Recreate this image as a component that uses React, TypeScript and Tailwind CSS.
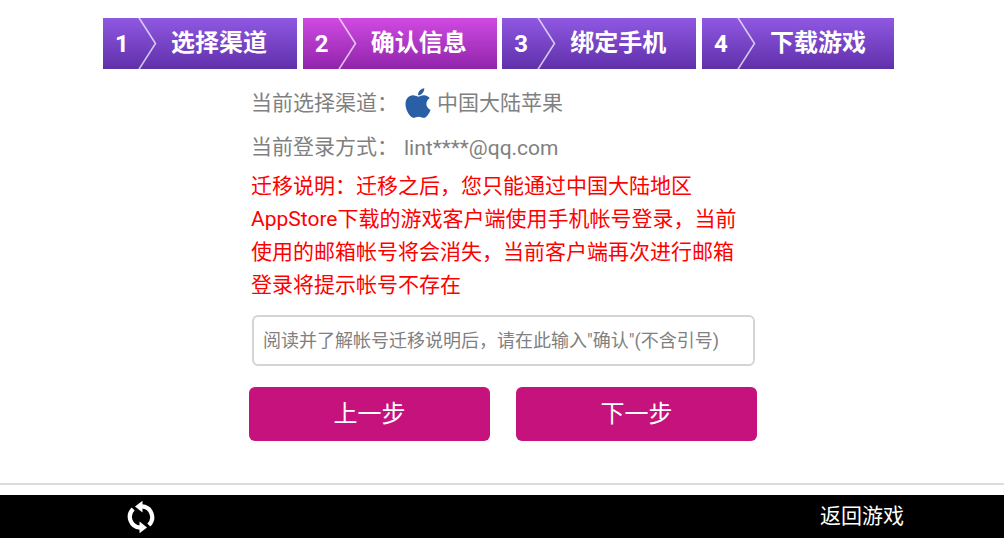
import React from 'react';
import { FaApple } from 'react-icons/fa';

const STEPS = [
  { num: '1', title: '选择渠道', width: 'w-[194px]', active: false },
  { num: '2', title: '确认信息', width: 'w-[194px]', active: true },
  { num: '3', title: '绑定手机', width: 'w-[194px]', active: false },
  { num: '4', title: '下载游戏', width: 'w-[192px]', active: false },
];

const Chevron = () => (
  <svg width="22" height="51" viewBox="0 0 22 51" className="shrink-0" fill="none">
    <path d="M1.5 -1 L18.5 25.5 L1.5 52" stroke="#fff" strokeOpacity="0.7" strokeWidth="1.6" />
  </svg>
);

const SyncIcon = () => (
  <svg width="28" height="34" viewBox="0 0 28 34" fill="#fff">
    <path d="M15 6.4 A10.8 10.8 0 0 1 21.8 25" fill="none" stroke="#fff" strokeWidth="4.2" />
    <path d="M13 27.6 A10.8 10.8 0 0 1 6.2 9" fill="none" stroke="#fff" strokeWidth="4.2" />
    <path d="M15.5 0.8 L15.5 12.4 L8 6.6 Z" />
    <path d="M12.5 21.6 L12.5 33.2 L20 27.4 Z" />
  </svg>
);

export default function App() {
  return (
    <div
      className="flex h-[538px] w-[1004px] flex-col overflow-hidden bg-white"
      style={{ fontFamily: 'Roboto, "Noto Sans CJK SC", sans-serif' }}
    >
      {/* Steps */}
      <div className="ml-[103px] mt-[18px] flex gap-[5.67px]">
        {STEPS.map((step) => (
          <div
            key={step.num}
            className={`flex h-[51px] items-center text-white ${step.width} ${
              step.active
                ? 'bg-gradient-to-b from-[#d04ae2] to-[#9024aa]'
                : 'bg-gradient-to-b from-[#9058e2] to-[#6030aa]'
            }`}
          >
            <span className="w-[34px] shrink-0 pl-[12px] text-[24px] font-bold leading-none">{step.num}</span>
            <Chevron />
            <span className="ml-[12px] mt-[-2px] text-[24px] font-bold leading-none">{step.title}</span>
          </div>
        ))}
      </div>

      {/* Info */}
      <div className="ml-[251px] mt-[17px] w-[505px]">
        <div className="flex h-[36px] items-center text-[21px] text-[#808080]">
          <span className="w-[150px]">当前选择渠道：</span>
          <FaApple className="mb-[2px] text-[34px] text-[#2a5ea5]" />
          <span className="ml-[2px]">中国大陆苹果</span>
        </div>
        <div className="mt-[8px] flex h-[36px] items-center text-[21px] text-[#808080]">
          <span className="w-[153px]">当前登录方式：</span>
          <span className="mt-[2px] text-[21px]">lint****@qq.com</span>
        </div>
        <p className="mt-[4px] w-[490px] text-[21px] leading-[33px] text-[#ff0000]">
          迁移说明：迁移之后，您只能通过中国大陆地区
          <br />
          AppStore下载的游戏客户端使用手机帐号登录，当前
          <br />
          使用的邮箱帐号将会消失，当前客户端再次进行邮箱
          <br />
          登录将提示帐号不存在
        </p>
        <input
          readOnly
          placeholder={'阅读并了解帐号迁移说明后，请在此输入"确认"(不含引号)'}
          className="ml-[1px] mt-[13px] block h-[51px] w-[503px] rounded-[6px] border-2 border-[#d4d4d4] bg-white px-[9px] text-[18px] outline-none placeholder:text-[#808080]"
        />
      </div>

      {/* Buttons */}
      <div className="ml-[249px] mt-[21px] flex gap-[26px]">
        <button className="h-[54px] w-[241px] rounded-[6px] bg-[#c6127c] text-[24px] text-white">上一步</button>
        <button className="h-[54px] w-[241px] rounded-[6px] bg-[#c6127c] text-[24px] text-white">下一步</button>
      </div>

      {/* Footer */}
      <div className="mt-[42px] h-[2px] bg-[#dddddd]" />
      <div className="mt-[10px] flex h-[43px] items-center justify-between bg-black pl-[127px] pr-[100px]">
        <SyncIcon />
        <span className="text-[21px] text-white">返回游戏</span>
      </div>
    </div>
  );
}
